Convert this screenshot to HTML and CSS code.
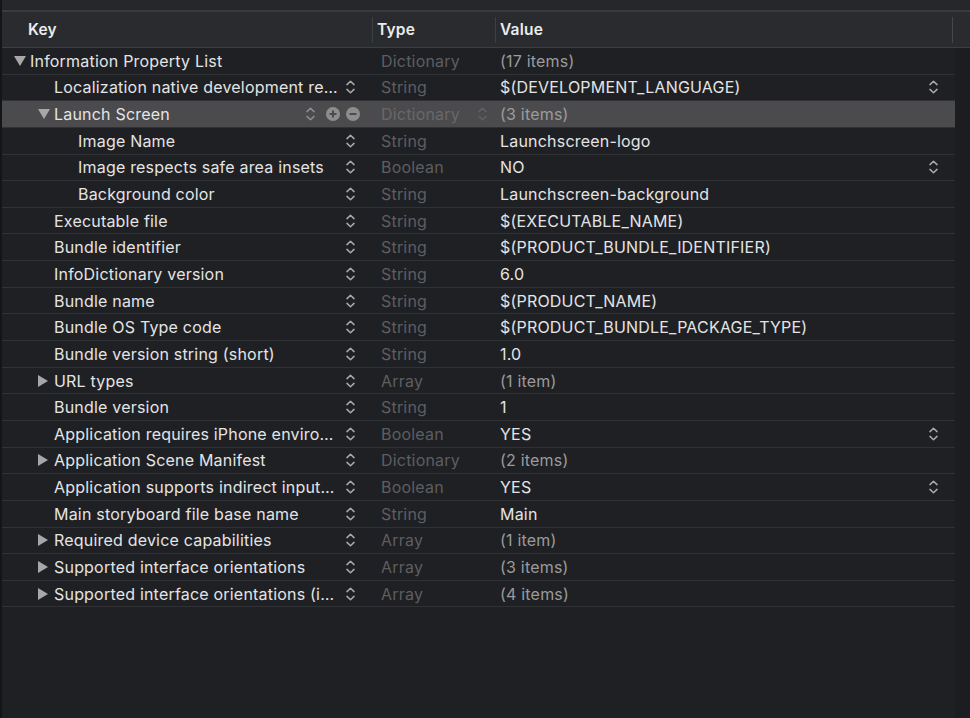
FILE: index.html
```html
<!DOCTYPE html>
<html>
<head>
<meta charset="utf-8">
<link rel="stylesheet" href="styles.css">
</head>
<body>
<svg width="0" height="0" class="defs">
  <defs>
    <symbol id="stepper" viewBox="0 0 9 16"><path d="M1 5.6 L4.5 2.2 L8 5.6 M1 10.4 L4.5 13.8 L8 10.4" fill="none" stroke="currentColor" stroke-width="1.5" stroke-linecap="round" stroke-linejoin="round"/></symbol>
    <symbol id="down" viewBox="0 0 12 10"><path d="M0 0 H12 L6 10 Z" fill="currentColor"/></symbol>
    <symbol id="right" viewBox="0 0 10 12"><path d="M0 0 V12 L10 6 Z" fill="currentColor"/></symbol>
  </defs>
</svg>
<div class="editor">
  <div class="topstrip"></div>
  <div class="header">
    <div class="hcell hkey">Key</div>
    <div class="hcell htype">Type</div>
    <div class="hcell hvalue">Value</div>
  </div>
  <div class="rows">
    <div class="row">
      <div class="key l0"><svg class="disc"><use href="#down"/></svg><span class="name">Information Property List</span></div>
      <div class="type">Dictionary</div>
      <div class="value dim">(17 items)</div>
    </div>
    <div class="row">
      <div class="key l1"><span class="name">Localization native development re…</span><svg class="step"><use href="#stepper"/></svg></div>
      <div class="type">String</div>
      <div class="value"><span class="vtext">$(DEVELOPMENT_LANGUAGE)</span><svg class="step vstep"><use href="#stepper"/></svg></div>
    </div>
    <div class="row selected">
      <div class="key l1"><svg class="disc"><use href="#down"/></svg><span class="name">Launch Screen</span>
        <svg class="step"><use href="#stepper"/></svg>
        <svg class="circ" viewBox="0 0 14 14"><circle cx="7" cy="7" r="7" fill="currentColor"/><path d="M3.5 7 H10.5 M7 3.5 V10.5" stroke="#4b4b4d" stroke-width="2"/></svg>
        <svg class="circ" viewBox="0 0 14 14"><circle cx="7" cy="7" r="7" fill="currentColor"/><path d="M3.5 7 H10.5" stroke="#4b4b4d" stroke-width="2"/></svg>
      </div>
      <div class="type">Dictionary<svg class="step tstep"><use href="#stepper"/></svg></div>
      <div class="value dim">(3 items)</div>
    </div>
    <div class="row">
      <div class="key l2"><span class="name">Image Name</span><svg class="step"><use href="#stepper"/></svg></div>
      <div class="type">String</div>
      <div class="value">Launchscreen-logo</div>
    </div>
    <div class="row">
      <div class="key l2"><span class="name">Image respects safe area insets</span><svg class="step"><use href="#stepper"/></svg></div>
      <div class="type">Boolean</div>
      <div class="value"><span class="vtext">NO</span><svg class="step vstep"><use href="#stepper"/></svg></div>
    </div>
    <div class="row">
      <div class="key l2"><span class="name">Background color</span><svg class="step"><use href="#stepper"/></svg></div>
      <div class="type">String</div>
      <div class="value">Launchscreen-background</div>
    </div>
    <div class="row">
      <div class="key l1"><span class="name">Executable file</span><svg class="step"><use href="#stepper"/></svg></div>
      <div class="type">String</div>
      <div class="value">$(EXECUTABLE_NAME)</div>
    </div>
    <div class="row">
      <div class="key l1"><span class="name">Bundle identifier</span><svg class="step"><use href="#stepper"/></svg></div>
      <div class="type">String</div>
      <div class="value">$(PRODUCT_BUNDLE_IDENTIFIER)</div>
    </div>
    <div class="row">
      <div class="key l1"><span class="name">InfoDictionary version</span><svg class="step"><use href="#stepper"/></svg></div>
      <div class="type">String</div>
      <div class="value">6.0</div>
    </div>
    <div class="row">
      <div class="key l1"><span class="name">Bundle name</span><svg class="step"><use href="#stepper"/></svg></div>
      <div class="type">String</div>
      <div class="value">$(PRODUCT_NAME)</div>
    </div>
    <div class="row">
      <div class="key l1"><span class="name">Bundle OS Type code</span><svg class="step"><use href="#stepper"/></svg></div>
      <div class="type">String</div>
      <div class="value">$(PRODUCT_BUNDLE_PACKAGE_TYPE)</div>
    </div>
    <div class="row">
      <div class="key l1"><span class="name">Bundle version string (short)</span><svg class="step"><use href="#stepper"/></svg></div>
      <div class="type">String</div>
      <div class="value">1.0</div>
    </div>
    <div class="row">
      <div class="key l1"><svg class="disc r"><use href="#right"/></svg><span class="name">URL types</span><svg class="step"><use href="#stepper"/></svg></div>
      <div class="type">Array</div>
      <div class="value dim">(1 item)</div>
    </div>
    <div class="row">
      <div class="key l1"><span class="name">Bundle version</span><svg class="step"><use href="#stepper"/></svg></div>
      <div class="type">String</div>
      <div class="value">1</div>
    </div>
    <div class="row">
      <div class="key l1"><span class="name">Application requires iPhone enviro…</span><svg class="step"><use href="#stepper"/></svg></div>
      <div class="type">Boolean</div>
      <div class="value"><span class="vtext">YES</span><svg class="step vstep"><use href="#stepper"/></svg></div>
    </div>
    <div class="row">
      <div class="key l1"><svg class="disc r"><use href="#right"/></svg><span class="name">Application Scene Manifest</span><svg class="step"><use href="#stepper"/></svg></div>
      <div class="type">Dictionary</div>
      <div class="value dim">(2 items)</div>
    </div>
    <div class="row">
      <div class="key l1"><span class="name">Application supports indirect input…</span><svg class="step"><use href="#stepper"/></svg></div>
      <div class="type">Boolean</div>
      <div class="value"><span class="vtext">YES</span><svg class="step vstep"><use href="#stepper"/></svg></div>
    </div>
    <div class="row">
      <div class="key l1"><span class="name">Main storyboard file base name</span><svg class="step"><use href="#stepper"/></svg></div>
      <div class="type">String</div>
      <div class="value">Main</div>
    </div>
    <div class="row">
      <div class="key l1"><svg class="disc r"><use href="#right"/></svg><span class="name">Required device capabilities</span><svg class="step"><use href="#stepper"/></svg></div>
      <div class="type">Array</div>
      <div class="value dim">(1 item)</div>
    </div>
    <div class="row">
      <div class="key l1"><svg class="disc r"><use href="#right"/></svg><span class="name">Supported interface orientations</span><svg class="step"><use href="#stepper"/></svg></div>
      <div class="type">Array</div>
      <div class="value dim">(3 items)</div>
    </div>
    <div class="row">
      <div class="key l1"><svg class="disc r"><use href="#right"/></svg><span class="name">Supported interface orientations (i…</span><svg class="step"><use href="#stepper"/></svg></div>
      <div class="type">Array</div>
      <div class="value dim">(4 items)</div>
    </div>
  </div>
</div>
</body>
</html>
```
FILE: styles.css
```css
html, body {
  margin: 0;
  padding: 0;
  height: 100%;
  background: #1e1f22;
}
.defs { position: absolute; width: 0; height: 0; }
.editor {
  height: 718px;
  overflow: hidden;
  border-left: 2px solid #141518;
  background: linear-gradient(to right, #1f2023 0, #1f2023 953px, #1c1d20 953px);
  font-family: Inter, "Noto Sans", sans-serif;
  font-size: 16px;
  letter-spacing: 0.2px;
  color: #e2e2e3;
  box-sizing: border-box;
}
.topstrip {
  height: 10px;
  background: #26272a;
  border-bottom: 2px solid #3a3b3e;
}
.header {
  display: grid;
  grid-template-columns: 370px 123px 458px 15px;
  height: 35px;
  background: #2a2b2e;
  border-bottom: 1px solid #3d3e41;
  align-items: center;
}
.hcell {
  font-weight: 600;
  font-size: 15.5px;
  color: #ececec;
  height: 26px;
  line-height: 26px;
}
.hkey { padding-left: 26px; }
.htype { border-left: 1px solid #3e3f43; padding-left: 4px; }
.hvalue { border-left: 1px solid #3e3f43; padding-left: 4px; border-right: 1px solid #46474b; }
.rows { width: 953px; }
.row {
  display: grid;
  grid-template-columns: 370px 123px 1fr;
  height: 26.65px;
  box-sizing: border-box;
  border-bottom: 1px solid #303135;
  align-items: center;
}
.row.selected { background: #4b4b4d; }
.key {
  display: flex;
  align-items: center;
  height: 100%;
  padding-right: 17px;
  min-width: 0;
}
.selected .key { padding-right: 12px; }
.key.l0 { padding-left: 12px; }
.key.l1 { padding-left: 36px; }
.key.l2 { padding-left: 60px; }
.disc {
  width: 12px;
  height: 10px;
  color: #a7a7a8;
  margin-right: 4px;
  flex: none;
}
.disc.r { width: 10px; height: 12px; margin-right: 6px; }
.key.l1 .name, .key.l2 .name { margin-left: 16px; }
.key.l1 .disc + .name { margin-left: 0; }
.name {
  flex: 1;
  white-space: nowrap;
  overflow: hidden;
  color: #e4e4e5;
}
.step {
  width: 9px;
  height: 16px;
  color: #a9a9aa;
  flex: none;
}
.circ {
  width: 14px;
  height: 14px;
  color: #8d8d8e;
  flex: none;
  margin-left: 6px;
}
.selected .step { color: #8d8d8e; margin-right: 5px; }
.type {
  padding-left: 9px;
  color: #5d5e61;
  display: flex;
  align-items: center;
  padding-right: 8px;
  justify-content: space-between;
}
.selected .type { color: #68686a; }
.selected .type .tstep { color: #606062; margin-right: 0; }
.value {
  padding-left: 5px;
  padding-right: 17px;
  display: flex;
  align-items: center;
  justify-content: space-between;
  color: #e4e4e5;
}
.value.dim { color: #9b9b9d; }
.vstep { color: #a9a9aa; }
```
